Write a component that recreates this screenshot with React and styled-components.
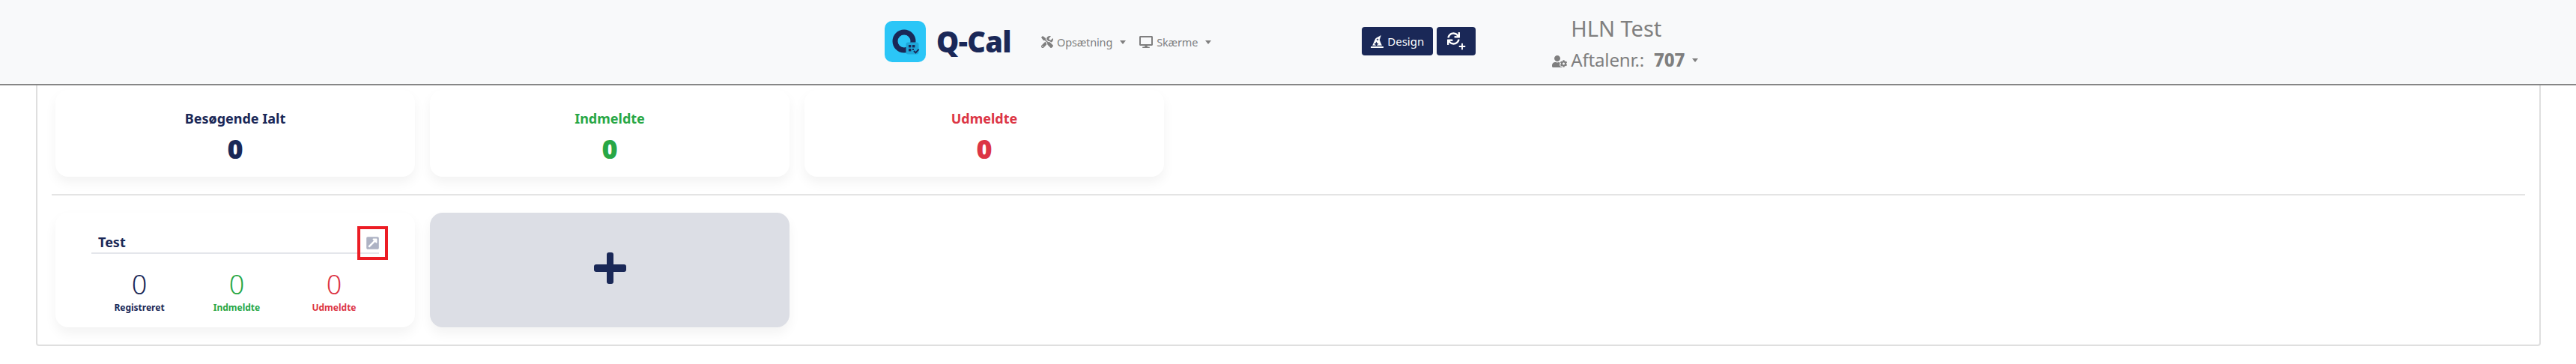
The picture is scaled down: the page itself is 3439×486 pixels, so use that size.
import React from "react";
import styled, { createGlobalStyle } from "styled-components";
import { FaTools, FaDesktop, FaUserCog, FaHatWizard, FaSync, FaPlus, FaExternalLinkSquareAlt } from "react-icons/fa";

const navy = "#1a2857";
const green = "#28a745";
const red = "#dc3545";
const grey = "#7f7f7f";

const Global = createGlobalStyle`
  html, body { margin: 0; padding: 0; background: #fff; overflow: hidden; }
  body { font-family: "Noto Sans", "Open Sans", sans-serif; }
`;
const Page = styled.div`
  width: 3439px; height: 486px; display: flex; flex-direction: column; overflow: hidden;
`;
const Nav = styled.header`
  height: 112px; flex: none; display: flex; align-items: flex-start;
  padding-left: 1181px; background: #f8f9fa; border-bottom: 2px solid #868686; box-sizing: content-box;
`;
const Brand = styled.div`
  display: flex; align-items: center; gap: 14px; margin-top: 28px; height: 55px;
`;
const BrandName = styled.span`
  font: 900 38px/55px "Noto Sans", sans-serif; color: ${navy}; letter-spacing: -0.6px;
`;
const Menu = styled.nav`
  display: flex; margin-top: 44px; gap: 18px; margin-left: 40px;
`;
const MenuItem = styled.div`
  display: flex; align-items: center; gap: 5px; height: 24px; color: ${grey};
  font-size: 14.5px; letter-spacing: -0.15px; line-height: 24px;
  svg { font-size: ${p => p.$icon}px; }
`;
const Caret = styled.i`
  display: inline-block; width: 0; height: 0; margin-left: ${p => p.$gap || 5}px;
  border-top: 5px solid currentColor; border-left: 4px solid transparent; border-right: 4px solid transparent;
`;
const Actions = styled.div`
  display: flex; gap: 5px; margin-left: 201px; margin-top: 36px;
`;
const ActionButton = styled.button`
  height: 38px; width: ${p => p.$w}px; display: flex; align-items: center; justify-content: center; gap: 5px;
  border: 0; border-radius: 4px; background: ${navy}; color: #fff; padding: 0;
  font: 400 15px/24px "Noto Sans", sans-serif;
  svg { font-size: 17px; }
`;
const SyncPlus = styled.span`
  display: inline-flex; position: relative; width: 25px; height: 24px;
  svg:last-child { position: absolute; right: 0; bottom: 0; font-size: 10px; }
`;
const Account = styled.div`
  margin-left: 102px; display: flex; flex-direction: column; align-items: flex-start; color: ${grey};
  margin-top: 17px;
`;
const AccountName = styled.div`
  font-size: 29px; line-height: 41px; margin-left: 25px; margin-bottom: 5px;
`;
const AccountLine = styled.div`
  display: flex; align-items: center; font-size: 24px; letter-spacing: -0.15px; line-height: 34px; white-space: pre;
  svg { font-size: 20px; width: 20px; margin-right: 5px; margin-top: 4px; }
  b { font-weight: 800; margin-left: 7px; }
`;
const Panel = styled.main`
  margin: 0 47px 24px 48px; flex: 1; padding: 6px 19px 0 19px;
  border: 2px solid #dfdfdf; border-top: 0; border-radius: 0 0 4px 4px;
`;
const CardRow = styled.section`
  display: flex; gap: 20px; padding: 0 0 23px 5px; height: 116px;
  & + & { border-top: 2px solid #e4e4e4; padding-top: 23px; height: 153px; padding-bottom: 0; }
`;
const Card = styled.div`
  width: 480px; border-radius: 17px; background: ${p => p.$fill || "#fff"};
  box-shadow: 0 8px 16px rgba(0,0,0,.05);
`;
const StatCard = styled(Card)`
  display: flex; flex-direction: column; align-items: center; padding-top: 25px; box-sizing: border-box;
  color: ${p => p.$color};
`;
const StatTitle = styled.div`
  font-size: 18px; font-weight: 700; line-height: 27px;
`;
const StatValue = styled.div`
  font-size: 36px; font-weight: 900; line-height: 46px; margin-top: 4px;
`;
const TestCard = styled(Card)`
  box-sizing: border-box; padding: 25px 48px 0;
`;
const TestHeader = styled.div`
  position: relative; height: 28px; display: flex; justify-content: space-between; align-items: center;
  border-bottom: 2px solid #e4e6eb; padding-left: 9px; color: ${navy};
`;
const TestName = styled.span`
  font-size: 18px; font-weight: 700; line-height: 28px;
`;
const OpenIcon = styled(FaExternalLinkSquareAlt)`
  font-size: 19px; color: #aeb3c4; margin-right: -1px; margin-top: 2px;
`;
const Highlight = styled.span`
  position: absolute; right: -12px; top: -7px; width: 41px; height: 45px; box-sizing: border-box;
  border: 4px solid #ec1c24;
`;
const Counters = styled.div`
  display: grid; grid-template-columns: repeat(3, 130px); margin-top: 17px; margin-left: -1px;
`;
const Counter = styled.div`
  display: flex; flex-direction: column; align-items: center; color: ${p => p.$color};
`;
const CounterValue = styled.div`
  font-size: 36px; font-weight: 300; line-height: 47px;
`;
const CounterLabel = styled.div`
  font-size: 12px; font-weight: 700; line-height: 16px;
`;
const AddCard = styled(Card)`
  display: flex; align-items: center; justify-content: center;
  svg { margin-bottom: 5px; }
`;

const Logo = () => (
  <svg width="55" height="55" viewBox="0 0 55 55">
    <rect width="55" height="55" rx="10" fill="#2bc6f7" />
    <circle cx="26" cy="27" r="12" fill="none" stroke={navy} strokeWidth="7" />
    <rect x="28.5" y="28.5" width="17" height="16" rx="3" fill="#1ea6d8" />
    <g fill={navy}>
      <rect x="32" y="32" width="3.4" height="3.4" />
      <rect x="37" y="32" width="3.4" height="3.4" />
      <rect x="32" y="37" width="3.4" height="3.4" />
      <rect x="37" y="37" width="2" height="2" />
    </g>
    <path d="M39 40l2.4 2.4 4.2-4.6" fill="none" stroke={navy} strokeWidth="2" />
  </svg>
);

const PlusMark = () => (
  <svg width="43" height="42" viewBox="0 0 43 42" fill={navy}>
    <rect x="0" y="16" width="43" height="10" rx="3" />
    <rect x="17" y="0" width="9" height="42" rx="3" />
  </svg>
);

const stats = [
  ["Besøgende Ialt", navy],
  ["Indmeldte", green],
  ["Udmeldte", red],
];
const counters = [
  ["Registreret", navy],
  ["Indmeldte", green],
  ["Udmeldte", red],
];

export default function App() {
  return (
    <Page>
      <Global />
      <Nav>
        <Brand>
          <Logo />
          <BrandName>Q-Cal</BrandName>
        </Brand>
        <Menu>
          <MenuItem $icon={16}><FaTools />Opsætning<Caret $gap={5} /></MenuItem>
          <MenuItem $icon={18}><FaDesktop />Skærme<Caret $gap={5} /></MenuItem>
        </Menu>
        <Actions>
          <ActionButton $w={95}><FaHatWizard />Design</ActionButton>
          <ActionButton $w={52}><SyncPlus><FaSync /><FaPlus /></SyncPlus></ActionButton>
        </Actions>
        <Account>
          <AccountName>HLN Test</AccountName>
          <AccountLine><FaUserCog />Aftalenr.: <b>707</b><Caret $gap={10} /></AccountLine>
        </Account>
      </Nav>
      <Panel>
        <CardRow>
          {stats.map(([label, color]) => (
            <StatCard key={label} $color={color}>
              <StatTitle>{label}</StatTitle>
              <StatValue>0</StatValue>
            </StatCard>
          ))}
        </CardRow>
        <CardRow>
          <TestCard>
            <TestHeader>
              <TestName>Test</TestName>
              <OpenIcon />
              <Highlight />
            </TestHeader>
            <Counters>
              {counters.map(([label, color]) => (
                <Counter key={label} $color={color}>
                  <CounterValue>0</CounterValue>
                  <CounterLabel>{label}</CounterLabel>
                </Counter>
              ))}
            </Counters>
          </TestCard>
          <AddCard $fill="#dcdee5"><PlusMark /></AddCard>
        </CardRow>
      </Panel>
    </Page>
  );
}
